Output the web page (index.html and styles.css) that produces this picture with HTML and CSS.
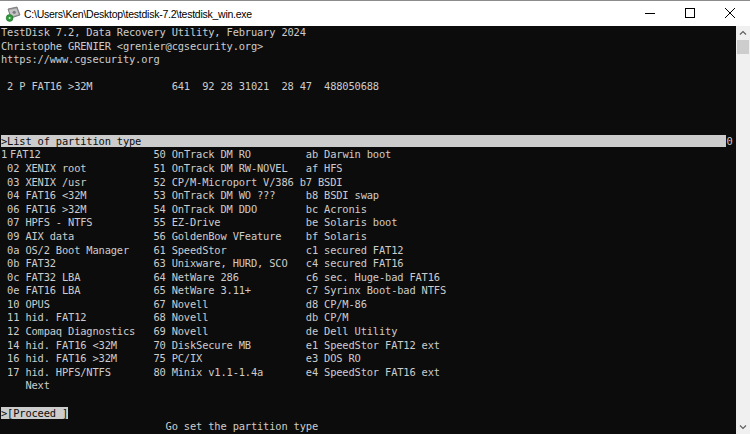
FILE: index.html
```html
<!DOCTYPE html>
<html>
<head>
  <meta http-equiv="content-type" content="text/html; charset=utf-8" />
  <title>testdisk_win.exe</title>
  <link rel="stylesheet" href="styles.css">
</head>

<body>
  <div class="window">
    <div class="titlebar">
      <svg class="app-icon" width="16" height="16" viewBox="0 0 16 16">
        <path d="M3 3 L12 1 L15 9 L6 12 Z" fill="#9a9a9a" stroke="#6d6d6d" stroke-width="0.8"/>
        <path d="M4 4 L11.5 2.4 L13.6 8.4 L6.4 10.6 Z" fill="#c4c4c4"/>
        <circle cx="9.2" cy="6.3" r="1.6" fill="#7d7d7d"/>
        <circle cx="4.6" cy="12" r="3.4" fill="#2f9a3b" stroke="#1f6e28" stroke-width="0.6"/>
        <circle cx="4.6" cy="12" r="1" fill="#d9f0d9"/>
      </svg>
      <span class="title">C:\Users\Ken\Desktop\testdisk-7.2\testdisk_win.exe</span>
      <div class="controls">
        <svg class="ctl" width="40" height="26" viewBox="0 0 40 26">
          <line x1="15" y1="13.5" x2="25" y2="13.5" stroke="#000" stroke-width="1"/>
        </svg>
        <svg class="ctl" width="40" height="26" viewBox="0 0 40 26">
          <rect x="15.5" y="8.5" width="9" height="9" fill="none" stroke="#000" stroke-width="1"/>
        </svg>
        <svg class="ctl" width="40" height="26" viewBox="0 0 40 26">
          <path d="M15 8 L25 18 M25 8 L15 18" stroke="#000" stroke-width="1"/>
        </svg>
      </div>
    </div>

    <div class="body">
<pre class="console">TestDisk 7.2, Data Recovery Utility, February 2024
Christophe GRENIER &lt;grenier@cgsecurity.org&gt;
https://www.cgsecurity.org

 2 P FAT16 &gt;32M             641  92 28 31021  28 47  488050688



<span class="hl">&gt;List of partition type                                                                                                </span>0
1<span class="tight">FAT12</span>                   50 OnTrack DM RO         ab Darwin boot
 02 XENIX root           51 OnTrack DM RW-NOVEL   af HFS
 03 XENIX /usr           52 CP/M-Microport V/386 b7 BSDI
 04 FAT16 &lt;32M           53 OnTrack DM WO ???     b8 BSDI swap
 06 FAT16 &gt;32M           54 OnTrack DM DDO        bc Acronis
 07 HPFS - NTFS          55 EZ-Drive              be Solaris boot
 09 AIX data             56 GoldenBow VFeature    bf Solaris
 0a OS/2 Boot Manager    61 SpeedStor             c1 secured FAT12
 0b FAT32                63 Unixware, HURD, SCO   c4 secured FAT16
 0c FAT32 LBA            64 NetWare 286           c6 sec. Huge-bad FAT16
 0e FAT16 LBA            65 NetWare 3.11+         c7 Syrinx Boot-bad NTFS
 10 OPUS                 67 Novell                d8 CP/M-86
 11 hid. FAT12           68 Novell                db CP/M
 12 Compaq Diagnostics   69 Novell                de Dell Utility
 14 hid. FAT16 &lt;32M      70 DiskSecure MB         e1 SpeedStor FAT12 ext
 16 hid. FAT16 &gt;32M      75 PC/IX                 e3 DOS RO
 17 hid. HPFS/NTFS       80 Minix v1.1-1.4a       e4 SpeedStor FAT16 ext
    Next

<span class="hl">&gt;[Proceed ]</span>
                           Go set the partition type</pre>
      <div class="scrollbar">
        <svg class="arrow" width="14" height="14" viewBox="0 0 14 14">
          <path d="M4 8.5 L7 5.5 L10 8.5" fill="none" stroke="#606060" stroke-width="1.2"/>
        </svg>
        <div class="thumb"></div>
        <div class="track"></div>
        <svg class="arrow" width="14" height="14" viewBox="0 0 14 14">
          <path d="M4 5.5 L7 8.5 L10 5.5" fill="none" stroke="#606060" stroke-width="1.2"/>
        </svg>
      </div>
    </div>
  </div>
</body>

</html>
```

FILE: styles.css
```css
html, body {
  margin: 0;
  padding: 0;
  background: #0c0c0c;
}
.window {
  width: 750px;
  height: 434px;
  display: flex;
  flex-direction: column;
  overflow: hidden;
}
.titlebar {
  height: 25px;
  flex: none;
  background: #fff;
  border-top: 1px solid #8c8c8c;
  display: flex;
  align-items: center;
}
.app-icon {
  margin-left: 5px;
  margin-top: 1px;
}
.title {
  margin-left: 3px;
  font-family: "Liberation Sans", Arial, sans-serif;
  font-size: 10.5px;
  letter-spacing: -0.25px;
  color: #000;
}
.controls {
  margin-left: auto;
  display: flex;
}
.ctl {
  display: block;
  margin-top: -1px;
}
.body {
  flex: 1;
  display: flex;
  min-height: 0;
}
.console {
  margin: 0;
  padding: 0 0 0 1px;
  width: 735px;
  flex: none;
  overflow: hidden;
  background: #0c0c0c;
  color: #cccccc;
  font-family: "DejaVu Sans Mono", monospace;
  font-size: 10.4px;
  letter-spacing: -0.16px;
  line-height: 13.6px;
  white-space: pre;
}
.hl {
  background: #cccccc;
  color: #0c0c0c;
}
.tight {
  margin-left: 3px;
  margin-right: -3px;
}
.scrollbar {
  width: 14px;
  flex: none;
  background: #f0f0f0;
  display: flex;
  flex-direction: column;
}
.arrow {
  display: block;
  flex: none;
}
.thumb {
  height: 14px;
  margin: 0 1px;
  background: #cdcdcd;
  flex: none;
}
.track {
  flex: 1;
}
```
